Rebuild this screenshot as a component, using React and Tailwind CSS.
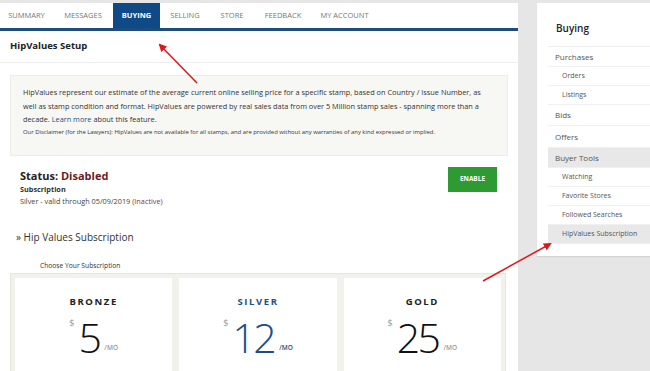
import React from "react";

const tabs = ["SUMMARY", "MESSAGES", "BUYING", "SELLING", "STORE", "FEEDBACK", "MY ACCOUNT"];
const tabW = [53, 60, 47, 50, 44, 58, 65];

function Card({ name, price, blue }) {
  return (
    <div className="flex-1 bg-white h-[100px] flex flex-col items-center pt-[17px]">
      <div className={`text-[9.5px] leading-[14px] font-bold tracking-[1.6px] ${blue ? "text-[#1d4f86]" : "text-[#222]"}`}>{name}</div>
      <div className="flex items-start mt-[8px]">
        <span className="text-[9px] leading-[10px] text-[#999] mt-[1px] mr-[4px]">$</span>
        <span className={`text-[41px] leading-[40px] font-light tracking-[-2.5px] ${blue ? "text-[#1d4f86]" : "text-[#111]"}`}>{price}</span>
        <span className={`text-[6.5px] leading-[8px] mt-[27px] ml-[5px] font-semibold ${blue ? "text-[#1d4f86]" : "text-[#999]"}`}>/MO</span>
      </div>
    </div>
  );
}

export default function App() {
  const side = [
    { t: "Purchases", h: "h-[20px]" },
    { t: "Orders", sub: true },
    { t: "Listings", sub: true },
    { t: "Bids", h: "h-[21px]" },
    { t: "Offers", h: "h-[22px]" },
    { t: "Buyer Tools", h: "h-[20px]", hl: true },
    { t: "Watching", sub: true },
    { t: "Favorite Stores", sub: true },
    { t: "Followed Searches", sub: true },
    { t: "HipValues Subscription", sub: true, hl: true },
  ];
  return (
    <div className="relative w-[650px] h-[371px] overflow-hidden bg-[#e6e6e6] flex items-start gap-[19px] pt-[3px]" style={{ fontFamily: '"Open Sans", sans-serif' }}>
      <div className="w-[518px] h-[400px] bg-white shrink-0">
        <div className="flex h-[25px] border-b-[3px] border-[#1c4d7c] box-content items-stretch text-[7.5px] text-[#777]">
          {tabs.map((t, i) => (
            <div key={t} className={`flex items-center justify-center ${t === "BUYING" ? "bg-[#0f4a87] text-white font-bold" : ""}`}
              style={{ width: tabW[i] }}>
              {t}
            </div>
          ))}
        </div>
        <div className="h-[32px] flex items-center px-[10px] border-b border-[#eee] text-[9.5px] font-bold text-[#222]">HipValues Setup</div>
        <div className="mx-[10px] mt-[12px] bg-[#f7f7f3] border border-[#ececea] pl-[12px] pr-[14px] pt-[10px] pb-[17px] text-[#333]">
          <p className="text-[7.35px] leading-[13.5px]">
            HipValues represent our estimate of the average current online selling price for a specific stamp, based on Country / Issue Number, as well as stamp condition and format. HipValues are powered by real sales data from over 5 Million stamp sales - spanning more than a decade. <span className="text-[#1d4f86]">Learn more</span> about this feature.
          </p>
          <p className="text-[5.9px] leading-[11px] whitespace-nowrap">Our Disclaimer (for the Lawyers): HipValues are not available for all stamps, and are provided without any warranties of any kind expressed or implied.</p>
        </div>
        <div className="flex justify-between items-start pl-[20px] pr-[21px] mt-[12px]">
          <div>
            <div className="text-[11px] font-bold text-[#222] leading-[16px]">Status: <span className="text-[#6e1c1c]">Disabled</span></div>
            <div className="text-[7.3px] font-bold text-[#333] leading-[11px]">Subscription</div>
            <div className="text-[7.3px] text-[#444] leading-[13px]">Silver - valid through 05/09/2019 <span className="text-[#8b2f45]">(Inactive)</span></div>
          </div>
          <div className="w-[49px] h-[25px] -mt-[1px] bg-[#2e9a32] text-white text-[6.5px] font-bold flex items-center justify-center">ENABLE</div>
        </div>
        <div className="px-[16px] mt-[22px] text-[10px] leading-[14px] text-[#333]">» Hip Values Subscription</div>
        <div className="px-[40px] mt-[17px] text-[6.7px] leading-[9px] text-[#333]">Choose Your Subscription</div>
        <div className="mx-[10px] mt-[3px] w-[496px] bg-[#f2f2ec] border border-[#e6e6dc] p-[4px] flex gap-[7px]">
          <Card name="BRONZE" price="5" />
          <Card name="SILVER" price="12" blue />
          <Card name="GOLD" price="25" />
        </div>
      </div>
      <div className="w-[120px] bg-white shrink-0 pl-[11px] pb-[12px] shadow-[0_1px_1px_rgba(0,0,0,0.08)]">
        <div className="h-[44px] pt-[18px] pl-[8px] text-[10px] leading-[14px] font-semibold text-[#222] border-b border-[#eee]">Buying</div>
        {side.map((s) => (
          <div key={s.t} className={`flex items-center border-b border-[#f0f0f0] whitespace-nowrap ${s.hl ? "bg-[#e8e8e8]" : ""} ${s.sub ? "h-[19px] pl-[14px] text-[7px] text-[#555]" : `${s.h} pl-[7px] text-[8px] text-[#555]`}`}>{s.t}</div>
        ))}
      </div>
      <svg className="absolute left-0 top-0 pointer-events-none" width="650" height="371">
        <defs>
          <marker id="ah" markerWidth="8" markerHeight="8" refX="6" refY="4" orient="auto" markerUnits="userSpaceOnUse">
            <path d="M0,0 L8,4 L0,8 z" fill="#e0161b" />
          </marker>
        </defs>
        <line x1="197" y1="83" x2="160" y2="45" stroke="#e0161b" strokeWidth="1.5" markerEnd="url(#ah)" />
        <line x1="483" y1="281" x2="550" y2="244" stroke="#e0161b" strokeWidth="1.5" markerEnd="url(#ah)" />
      </svg>
    </div>
  );
}
